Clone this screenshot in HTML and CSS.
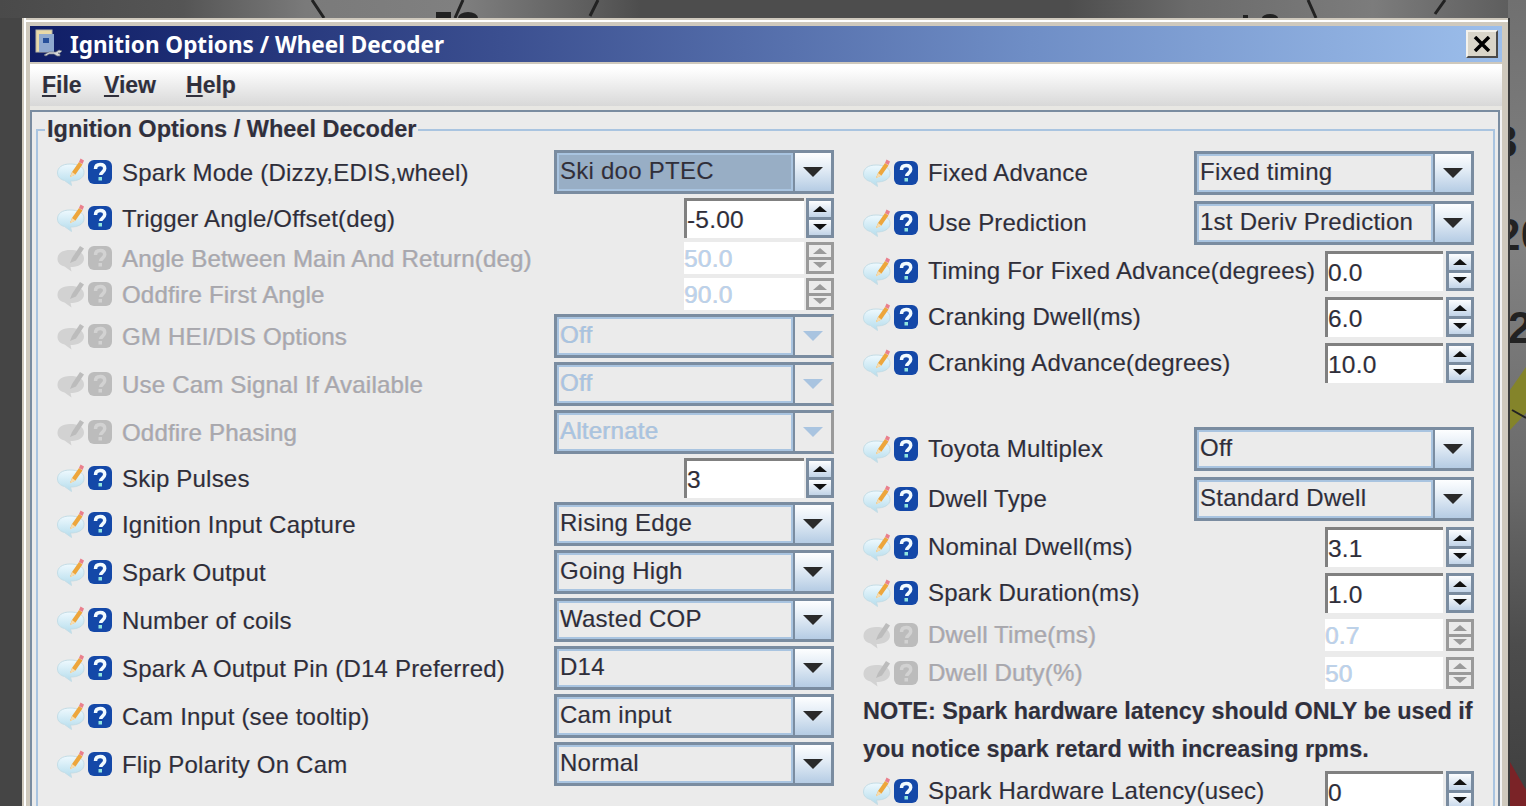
FILE: index.html
```html
<!DOCTYPE html>
<html lang="en">
<head>
    <meta charset="UTF-8">
    <title>Ignition Options / Wheel Decoder</title>
    <link rel="stylesheet" href="styles.css">
</head>
<body>
    <!-- shared icons -->
    <svg class="defs" width="0" height="0">
        <defs>
            <linearGradient id="bubbleFill" x1="0" y1="0" x2="0" y2="1">
                <stop offset="0" stop-color="#eef9fe"/>
                <stop offset="1" stop-color="#b4dcec"/>
            </linearGradient>
            <symbol id="note" viewBox="0 0 28 28">
                <path d="M13 6C5 6 .5 9.500 .5 15c0 4 3 6.500 7 7.500l7 5-1-4.500c7 0 13.500-2.500 13.500-8.500S21 6 13 6z" fill="url(#bubbleFill)" stroke="#c4dde6"/>
                <path d="M13 19l2-5 7-10 3.500 2.500-7 10z" fill="#eda63c"/>
                <path d="M13 19.500l2-5.500 3.500 2.500z" fill="#f6dcae"/>
                <path d="M22 4l1.500-3.500 3.500 2-1.500 3.500z" fill="#ea7f8c"/>
            </symbol>
            <symbol id="note-off" viewBox="0 0 28 28">
                <path d="M13 6C5 6 .5 9.500 .5 15c0 4 3 6.500 7 7.500l7 5-1-4.500c7 0 13.500-2.500 13.500-8.500S21 6 13 6z" fill="#d2d2d2"/>
                <path d="M13 19l2-5 8-12 4 2.500-8 12z" fill="#bcbcbc"/>
            </symbol>
            <symbol id="help" viewBox="0 0 24 24">
                <rect width="24" height="24" rx="6" fill="#1448a8"/>
                <path d="M7.500 9c0-3 2-4.500 4.700-4.500s4.500 1.500 4.500 4c0 3.500-4 3.500-4 6.500" fill="none" stroke="#f2fbff" stroke-width="3.500"/>
                <rect x="10.500" y="17" width="3.500" height="3.500" fill="#8fe6e0"/>
            </symbol>
            <symbol id="help-off" viewBox="0 0 24 24">
                <rect width="24" height="24" rx="6" fill="#bcbcbc"/>
                <path d="M7.500 9c0-3 2-4.500 4.700-4.500s4.500 1.500 4.500 4c0 3.500-4 3.500-4 6.500" fill="none" stroke="#d2d2d2" stroke-width="3.500"/>
                <rect x="10.500" y="17" width="3.500" height="3.500" fill="#d2d2d2"/>
            </symbol>
        </defs>
    </svg>

    <!-- gauge dashboard behind the window -->
    <svg class="gauge" width="1526" height="806" viewBox="0 0 1526 806">
        <defs>
            <linearGradient id="gaugeTop" x1="0" y1="0" x2="1" y2="0">
                <stop offset="0" stop-color="#4a4a4a"/>
                <stop offset=".12" stop-color="#555"/>
                <stop offset=".2" stop-color="#7a7a7a"/>
                <stop offset=".3" stop-color="#808080"/>
                <stop offset=".39" stop-color="#5c5c5c"/>
                <stop offset=".42" stop-color="#4d4d4d"/>
                <stop offset=".7" stop-color="#4d4d4d"/>
                <stop offset=".78" stop-color="#6b6b6b"/>
                <stop offset=".9" stop-color="#7c7c7c"/>
                <stop offset="1" stop-color="#5a5a5a"/>
            </linearGradient>
            <linearGradient id="gaugeSide" x1="0" y1="0" x2="0" y2="1">
                <stop offset="0" stop-color="#707070"/>
                <stop offset=".3" stop-color="#828282"/>
                <stop offset=".6" stop-color="#6a6a6a"/>
                <stop offset=".8" stop-color="#4c4c4c"/>
                <stop offset="1" stop-color="#3f3f3f"/>
            </linearGradient>
        </defs>
        <rect width="1526" height="806" fill="#454545"/>
        <rect width="1526" height="18" fill="url(#gaugeTop)"/>
        <rect x="1508" width="18" height="806" fill="url(#gaugeSide)"/>
        <path d="M312 0l12 18M455 18l8-18M590 16l8-16M1308 0l8 18M1435 14l10-14" stroke="#222" stroke-width="3" fill="none"/>
        <rect x="436" y="12" width="15" height="6" fill="#222"/>
        <ellipse cx="468" cy="18" rx="10" ry="6" fill="#222"/>
        <rect x="1243" y="15" width="5" height="3" fill="#222"/>
        <ellipse cx="1270" cy="18" rx="8" ry="4" fill="#222"/>
        <text x="1493" y="157" class="gauge-num">3</text>
        <text x="1496" y="250" class="gauge-num">20</text>
        <text x="1508" y="343" class="gauge-num">2</text>
        <path d="M1526 367L1510 390V430L1526 413z" fill="#84842a"/>
        <path d="M1512 410l14 8" stroke="#222" stroke-width="2"/>
        <path d="M1510 762l16 28v16h-16z" fill="#7a2327"/>
    </svg>

    <div class="window">
        <div class="titlebar">
            <svg class="title-icon" width="28" height="30" viewBox="0 0 28 30">
                <rect x="1" y="1" width="16" height="22" fill="#e8d9a8" stroke="#b9b7a8"/>
                <rect x="4" y="5" width="15" height="18" fill="#8fa9cf"/>
                <rect x="8" y="9" width="6" height="5" fill="#27509a"/>
                <path d="M9 26l5-3 7 0 3-2 3 1-2 2h-2l2 1 0 2-3 0-3-2-5 0-3 2z" fill="#d8d8d8" stroke="#6d7480" stroke-width=".7"/>
            </svg>
            <span class="title-text">Ignition Options / Wheel Decoder</span>
            <div class="close-btn">
                <svg width="18" height="16" viewBox="0 0 18 16"><path d="M2 1l14 14M16 1L2 15" stroke="#000" stroke-width="3.500"/></svg>
            </div>
        </div>
        <div class="menubar">
            <span class="menu"><u>F</u>ile</span>
            <span class="menu"><u>V</u>iew</span>
            <span class="menu"><u>H</u>elp</span>
        </div>
        <div class="panel">
            <fieldset class="group">
                <legend>Ignition Options / Wheel Decoder</legend>
                <div class="columns">
                    <div class="col col-left">
                        <div class="row row-combo">
                            <svg class="ic-note"><use href="#note"/></svg><svg class="ic-help"><use href="#help"/></svg>
                            <span class="label">Spark Mode (Dizzy,EDIS,wheel)</span>
                            <div class="combo selected"><div class="combo-val">Ski doo PTEC</div><div class="combo-btn"><i></i></div></div>
                        </div>
                        <div class="row row-spin">
                            <svg class="ic-note"><use href="#note"/></svg><svg class="ic-help"><use href="#help"/></svg>
                            <span class="label">Trigger Angle/Offset(deg)</span>
                            <div class="spin"><div class="spin-val">-5.00</div><div class="spin-btns"><b class="up"></b><b class="down"></b></div></div>
                        </div>
                        <div class="row row-spin-off off">
                            <svg class="ic-note"><use href="#note-off"/></svg><svg class="ic-help"><use href="#help-off"/></svg>
                            <span class="label">Angle Between Main And Return(deg)</span>
                            <div class="spin"><div class="spin-val">50.0</div><div class="spin-btns"><b class="up"></b><b class="down"></b></div></div>
                        </div>
                        <div class="row row-spin-off off">
                            <svg class="ic-note"><use href="#note-off"/></svg><svg class="ic-help"><use href="#help-off"/></svg>
                            <span class="label">Oddfire First Angle</span>
                            <div class="spin"><div class="spin-val">90.0</div><div class="spin-btns"><b class="up"></b><b class="down"></b></div></div>
                        </div>
                        <div class="row row-combo off">
                            <svg class="ic-note"><use href="#note-off"/></svg><svg class="ic-help"><use href="#help-off"/></svg>
                            <span class="label">GM HEI/DIS Options</span>
                            <div class="combo"><div class="combo-val">Off</div><div class="combo-btn"><i></i></div></div>
                        </div>
                        <div class="row row-combo off">
                            <svg class="ic-note"><use href="#note-off"/></svg><svg class="ic-help"><use href="#help-off"/></svg>
                            <span class="label">Use Cam Signal If Available</span>
                            <div class="combo"><div class="combo-val">Off</div><div class="combo-btn"><i></i></div></div>
                        </div>
                        <div class="row row-combo off">
                            <svg class="ic-note"><use href="#note-off"/></svg><svg class="ic-help"><use href="#help-off"/></svg>
                            <span class="label">Oddfire Phasing</span>
                            <div class="combo"><div class="combo-val">Alternate</div><div class="combo-btn"><i></i></div></div>
                        </div>
                        <div class="row row-spin">
                            <svg class="ic-note"><use href="#note"/></svg><svg class="ic-help"><use href="#help"/></svg>
                            <span class="label">Skip Pulses</span>
                            <div class="spin"><div class="spin-val">3</div><div class="spin-btns"><b class="up"></b><b class="down"></b></div></div>
                        </div>
                        <div class="row row-combo">
                            <svg class="ic-note"><use href="#note"/></svg><svg class="ic-help"><use href="#help"/></svg>
                            <span class="label">Ignition Input Capture</span>
                            <div class="combo"><div class="combo-val">Rising Edge</div><div class="combo-btn"><i></i></div></div>
                        </div>
                        <div class="row row-combo">
                            <svg class="ic-note"><use href="#note"/></svg><svg class="ic-help"><use href="#help"/></svg>
                            <span class="label">Spark Output</span>
                            <div class="combo"><div class="combo-val">Going High</div><div class="combo-btn"><i></i></div></div>
                        </div>
                        <div class="row row-combo">
                            <svg class="ic-note"><use href="#note"/></svg><svg class="ic-help"><use href="#help"/></svg>
                            <span class="label">Number of coils</span>
                            <div class="combo"><div class="combo-val">Wasted COP</div><div class="combo-btn"><i></i></div></div>
                        </div>
                        <div class="row row-combo">
                            <svg class="ic-note"><use href="#note"/></svg><svg class="ic-help"><use href="#help"/></svg>
                            <span class="label">Spark A Output Pin (D14 Preferred)</span>
                            <div class="combo"><div class="combo-val">D14</div><div class="combo-btn"><i></i></div></div>
                        </div>
                        <div class="row row-combo">
                            <svg class="ic-note"><use href="#note"/></svg><svg class="ic-help"><use href="#help"/></svg>
                            <span class="label">Cam Input (see tooltip)</span>
                            <div class="combo"><div class="combo-val">Cam input</div><div class="combo-btn"><i></i></div></div>
                        </div>
                        <div class="row row-combo">
                            <svg class="ic-note"><use href="#note"/></svg><svg class="ic-help"><use href="#help"/></svg>
                            <span class="label">Flip Polarity On Cam</span>
                            <div class="combo"><div class="combo-val">Normal</div><div class="combo-btn"><i></i></div></div>
                        </div>
                    </div>
                    <div class="col col-right">
                        <div class="row row-combo-r">
                            <svg class="ic-note"><use href="#note"/></svg><svg class="ic-help"><use href="#help"/></svg>
                            <span class="label">Fixed Advance</span>
                            <div class="combo"><div class="combo-val">Fixed timing</div><div class="combo-btn"><i></i></div></div>
                        </div>
                        <div class="row row-combo-r">
                            <svg class="ic-note"><use href="#note"/></svg><svg class="ic-help"><use href="#help"/></svg>
                            <span class="label">Use Prediction</span>
                            <div class="combo"><div class="combo-val">1st Deriv Prediction</div><div class="combo-btn"><i></i></div></div>
                        </div>
                        <div class="row row-spin-r">
                            <svg class="ic-note"><use href="#note"/></svg><svg class="ic-help"><use href="#help"/></svg>
                            <span class="label">Timing For Fixed Advance(degrees)</span>
                            <div class="spin"><div class="spin-val">0.0</div><div class="spin-btns"><b class="up"></b><b class="down"></b></div></div>
                        </div>
                        <div class="row row-spin-r">
                            <svg class="ic-note"><use href="#note"/></svg><svg class="ic-help"><use href="#help"/></svg>
                            <span class="label">Cranking Dwell(ms)</span>
                            <div class="spin"><div class="spin-val">6.0</div><div class="spin-btns"><b class="up"></b><b class="down"></b></div></div>
                        </div>
                        <div class="row row-spin-r">
                            <svg class="ic-note"><use href="#note"/></svg><svg class="ic-help"><use href="#help"/></svg>
                            <span class="label">Cranking Advance(degrees)</span>
                            <div class="spin"><div class="spin-val">10.0</div><div class="spin-btns"><b class="up"></b><b class="down"></b></div></div>
                        </div>
                        <div class="spacer"></div>
                        <div class="row row-combo-r">
                            <svg class="ic-note"><use href="#note"/></svg><svg class="ic-help"><use href="#help"/></svg>
                            <span class="label">Toyota Multiplex</span>
                            <div class="combo"><div class="combo-val">Off</div><div class="combo-btn"><i></i></div></div>
                        </div>
                        <div class="row row-combo-r">
                            <svg class="ic-note"><use href="#note"/></svg><svg class="ic-help"><use href="#help"/></svg>
                            <span class="label">Dwell Type</span>
                            <div class="combo"><div class="combo-val">Standard Dwell</div><div class="combo-btn"><i></i></div></div>
                        </div>
                        <div class="row row-spin-r">
                            <svg class="ic-note"><use href="#note"/></svg><svg class="ic-help"><use href="#help"/></svg>
                            <span class="label">Nominal Dwell(ms)</span>
                            <div class="spin"><div class="spin-val">3.1</div><div class="spin-btns"><b class="up"></b><b class="down"></b></div></div>
                        </div>
                        <div class="row row-spin-r">
                            <svg class="ic-note"><use href="#note"/></svg><svg class="ic-help"><use href="#help"/></svg>
                            <span class="label">Spark Duration(ms)</span>
                            <div class="spin"><div class="spin-val">1.0</div><div class="spin-btns"><b class="up"></b><b class="down"></b></div></div>
                        </div>
                        <div class="row row-off-r off">
                            <svg class="ic-note"><use href="#note-off"/></svg><svg class="ic-help"><use href="#help-off"/></svg>
                            <span class="label">Dwell Time(ms)</span>
                            <div class="spin"><div class="spin-val">0.7</div><div class="spin-btns"><b class="up"></b><b class="down"></b></div></div>
                        </div>
                        <div class="row row-off-r off">
                            <svg class="ic-note"><use href="#note-off"/></svg><svg class="ic-help"><use href="#help-off"/></svg>
                            <span class="label">Dwell Duty(%)</span>
                            <div class="spin"><div class="spin-val">50</div><div class="spin-btns"><b class="up"></b><b class="down"></b></div></div>
                        </div>
                        <div class="note">NOTE: Spark hardware latency should ONLY be used if<br>you notice spark retard with increasing rpms.</div>
                        <div class="row row-spin-r">
                            <svg class="ic-note"><use href="#note"/></svg><svg class="ic-help"><use href="#help"/></svg>
                            <span class="label">Spark Hardware Latency(usec)</span>
                            <div class="spin"><div class="spin-val">0</div><div class="spin-btns"><b class="up"></b><b class="down"></b></div></div>
                        </div>
                    </div>
                </div>
            </fieldset>
        </div>
    </div>
</body>
</html>
```

FILE: styles.css
```css
/* General Styles */
html, body {
    height: 100%;
}

body {
    margin: 0;
    width: 1526px;
    height: 806px;
    overflow: hidden;
    position: relative;
    font-family: "Liberation Sans", Arial, sans-serif;
    font-size: 24px;
    letter-spacing: 0.2px;
    color: #2f2f3a;
    background: #454545;
    text-shadow: -0.5px 0 rgba(225, 150, 60, 0.3), 0.5px 0 rgba(50, 130, 235, 0.3);
}

.defs {
    position: absolute;
}

.gauge {
    position: absolute;
    left: 0;
    top: 0;
}

.gauge-num {
    font-family: "Liberation Sans", sans-serif;
    font-weight: bold;
    font-size: 44px;
    fill: #222;
}

/* Window */
.window {
    position: absolute;
    left: 22px;
    top: 18px;
    width: 1472px;
    height: 780px;
    padding: 8px 6px 0 8px;
    overflow: hidden;
    background: #cfc9bd;
    box-shadow: inset 2px 0 #cfc9bd, inset 4px 0 #fff, inset 0 2px #cfc9bd, inset 0 4px #fff;
    border-right: 2px solid #3c3c3c;
    display: flex;
    flex-direction: column;
}

.titlebar {
    height: 36px;
    flex: none;
    display: flex;
    align-items: center;
    padding: 0 4px 0 5px;
    background: linear-gradient(90deg, #0f1d66 0%, #3b4f90 32%, #6f8ec6 68%, #9cbeeb 100%);
}

.title-icon {
    flex: none;
    margin-right: 7px;
}

.title-text {
    color: #fff;
    font-family: "Noto Sans", sans-serif;
    font-weight: bold;
    font-size: 22.5px;
    letter-spacing: 0;
    text-shadow: none;
}

.close-btn {
    margin-left: auto;
    width: 32px;
    height: 28px;
    box-sizing: border-box;
    display: flex;
    align-items: center;
    justify-content: center;
    background: #d9d5c9;
    border: 2px solid;
    border-color: #f4f2ec #4a4a4a #4a4a4a #f4f2ec;
}

.menubar {
    height: 42px;
    flex: none;
    margin-top: 2px;
    display: grid;
    grid-template-columns: 62px 82px auto;
    align-items: center;
    padding-left: 12px;
    background: linear-gradient(#fff 10%, #d8d8d8 100%);
    border-bottom: 4px solid #e8e7e3;
}

.menu {
    font-weight: bold;
    font-size: 23px;
    letter-spacing: 0;
    color: #30303c;
}

/* Panel + group box */
.panel {
    flex: 1;
    min-height: 0;
    margin-right: 2px;
    border: 2px solid #7a8ca0;
    border-bottom: none;
    background: #ebebeb;
    padding: 0 3px 0 4px;
    box-shadow: 2px 0 #f2f2f2;
}

.group {
    margin: 4px 0 0;
    padding: 5px 0 0;
    height: 800px;
    box-sizing: border-box;
    border: 2px solid #a9c4e0;
    min-width: 0;
}

legend {
    padding: 0 2px;
    margin-left: 7px;
    font-weight: bold;
    font-size: 23.5px;
    letter-spacing: 0;
    color: #30303c;
}

.columns {
    display: flex;
    justify-content: space-between;
    padding: 0 19px;
}

.col-left {
    width: 777px;
}

.col-right {
    width: 611px;
}

.col-left .label {
    padding-top: 2px;
}

/* Rows */
.row {
    display: flex;
    align-items: center;
}

.row-combo { height: 48px; }
.row-spin { height: 44px; }
.row-spin-off { height: 36px; }
.row-combo-r { height: 50px; }
.row-spin-r { height: 46px; }
.row-off-r { height: 38px; }

.spacer {
    height: 38px;
}

.ic-note {
    width: 28px;
    height: 28px;
    flex: none;
    margin-right: 3px;
}

.ic-help {
    width: 24px;
    height: 24px;
    flex: none;
    margin-right: 10px;
}

.off .label {
    color: #a8a8ad;
}

.note {
    font-weight: bold;
    font-size: 23.4px;
    letter-spacing: 0;
    line-height: 38px;
    white-space: nowrap;
    color: #30303c;
}

/* Combo box */
.combo {
    margin-left: auto;
    width: 280px;
    height: 44px;
    box-sizing: border-box;
    flex: none;
    display: flex;
    border: 3px solid #7a8ca0;
}

.combo-val {
    flex: 1;
    border: 2px solid #a9c4e0;
    background: #ebebeb;
    padding-left: 1px;
    line-height: 32px;
    letter-spacing: 0.25px;
}

.combo-btn {
    width: 36px;
    flex: none;
    border-left: 2px solid #7a8ca0;
    background: linear-gradient(#fdfeff, #e4edf6 40%, #b5cce4);
    display: flex;
    align-items: center;
    justify-content: center;
}

.combo-btn i {
    width: 0;
    height: 0;
    border-left: 10px solid transparent;
    border-right: 10px solid transparent;
    border-top: 10px solid #2a2a2a;
}

.selected .combo-val {
    background: #98aec5;
}

.off .combo-val {
    color: #a9c4e0;
}

.off .combo-btn {
    background: #ebebeb;
}

.off .combo-btn i {
    border-top-color: #a9c4e0;
}

.off .combo {
    border-right-color: #9a9a9a;
}

/* Spinner */
.spin {
    margin-left: auto;
    display: flex;
    gap: 2px;
    flex: none;
}

.spin-val {
    width: 120px;
    height: 40px;
    box-sizing: border-box;
    background: #fff;
    border-top: 3px solid #808080;
    border-left: 3px solid #808080;
    line-height: 38px;
    font-size: 24.5px;
}

.col-right .spin-val {
    width: 118px;
}

.col-right .spin {
    gap: 3px;
}

.spin-btns {
    width: 28px;
    height: 40px;
    box-sizing: border-box;
    border: 3px solid #7a8ca0;
    display: flex;
    flex-direction: column;
}

.spin-btns b {
    flex: 1;
    display: flex;
    align-items: center;
    justify-content: center;
    background: linear-gradient(#fdfeff, #c2d4e8);
}

.spin-btns .down {
    border-top: 3px solid #7a8ca0;
}

.spin-btns b::after {
    content: "";
    border-left: 7px solid transparent;
    border-right: 7px solid transparent;
}

.spin-btns .up::after {
    border-bottom: 6px solid #111;
}

.spin-btns .down::after {
    border-top: 6px solid #111;
}

/* Disabled spinners are shorter and grey */
.off .spin-val {
    height: 32px;
    border: none;
    line-height: 34px;
    color: #bcd2ea;
}

.off .spin-btns {
    height: 32px;
    border-color: #9a9a9a;
}

.off .spin-btns b {
    background: #ebebeb;
}

.off .spin-btns .down {
    border-top-color: #9a9a9a;
}

.off .spin-btns .up::after {
    border-bottom-color: #9a9a9a;
}

.off .spin-btns .down::after {
    border-top-color: #9a9a9a;
}
```
